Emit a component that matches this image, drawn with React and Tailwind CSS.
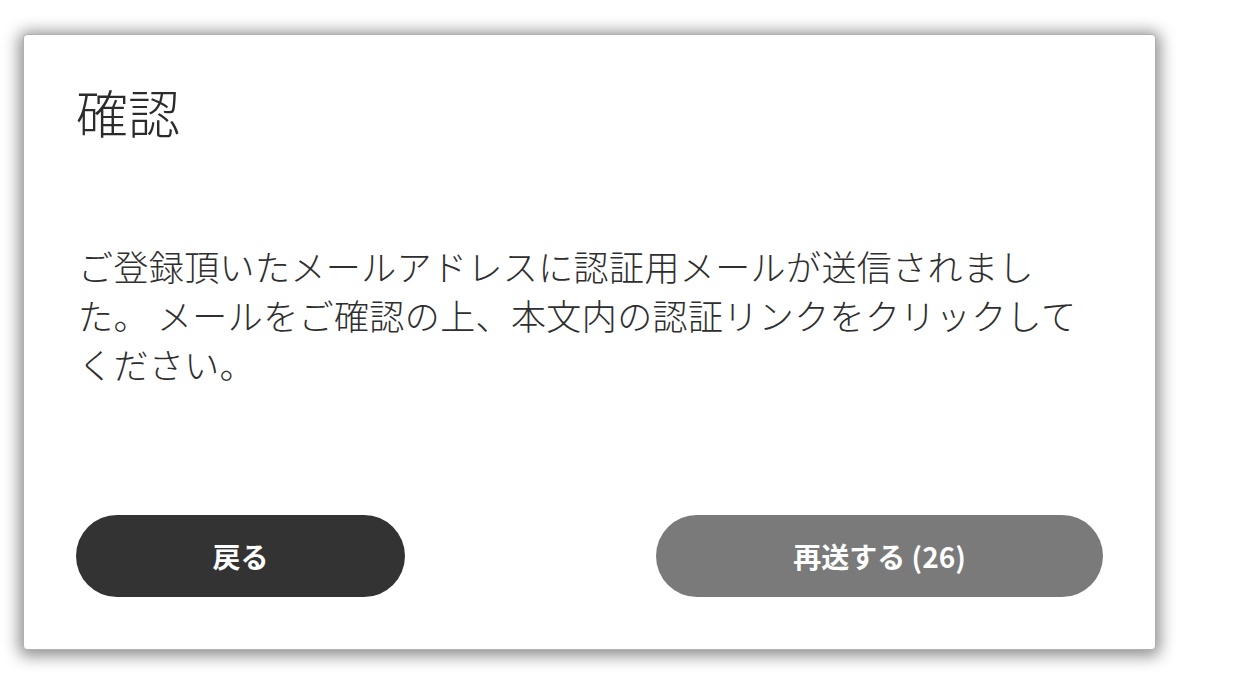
import React from "react";

const App = () => {
    const remaining = 26;

    return (
        <div className="min-h-screen w-full bg-white pl-[23px] pt-[34px] font-['Noto_Sans_CJK_JP',sans-serif]">
            <div className="flex h-[616px] w-[1133px] flex-col rounded-[4px] border border-[#b0b0b0] bg-white px-[52px] pb-[52px] pt-[51px] shadow-[0_2px_16px_4px_rgba(0,0,0,0.45)]">
                <h1 className="text-[52px] leading-none font-light text-[#2b2b2b]">
                    確認
                </h1>

                <p className="mt-[103px] pl-[2px] text-[35px] leading-[49px] font-light tracking-[0.4px] text-[#2e2e2e]">
                    ご登録頂いたメールアドレスに認証用メールが送信されまし
                    <br />
                    た。 メールをご確認の上、本文内の認証リンクをクリックして
                    <br />
                    ください。
                </p>

                <div className="mt-auto flex items-center justify-between">
                    <button className="flex h-[82px] w-[329px] items-center justify-center rounded-full bg-[#333333] text-[28px] font-bold text-white">
                        戻る
                    </button>
                    <button className="flex h-[82px] w-[447px] items-center justify-center rounded-full bg-[#7a7a7a] text-[28px] font-bold text-white">
                        再送する ({remaining})
                    </button>
                </div>
            </div>
        </div>
    );
};

export default App;
